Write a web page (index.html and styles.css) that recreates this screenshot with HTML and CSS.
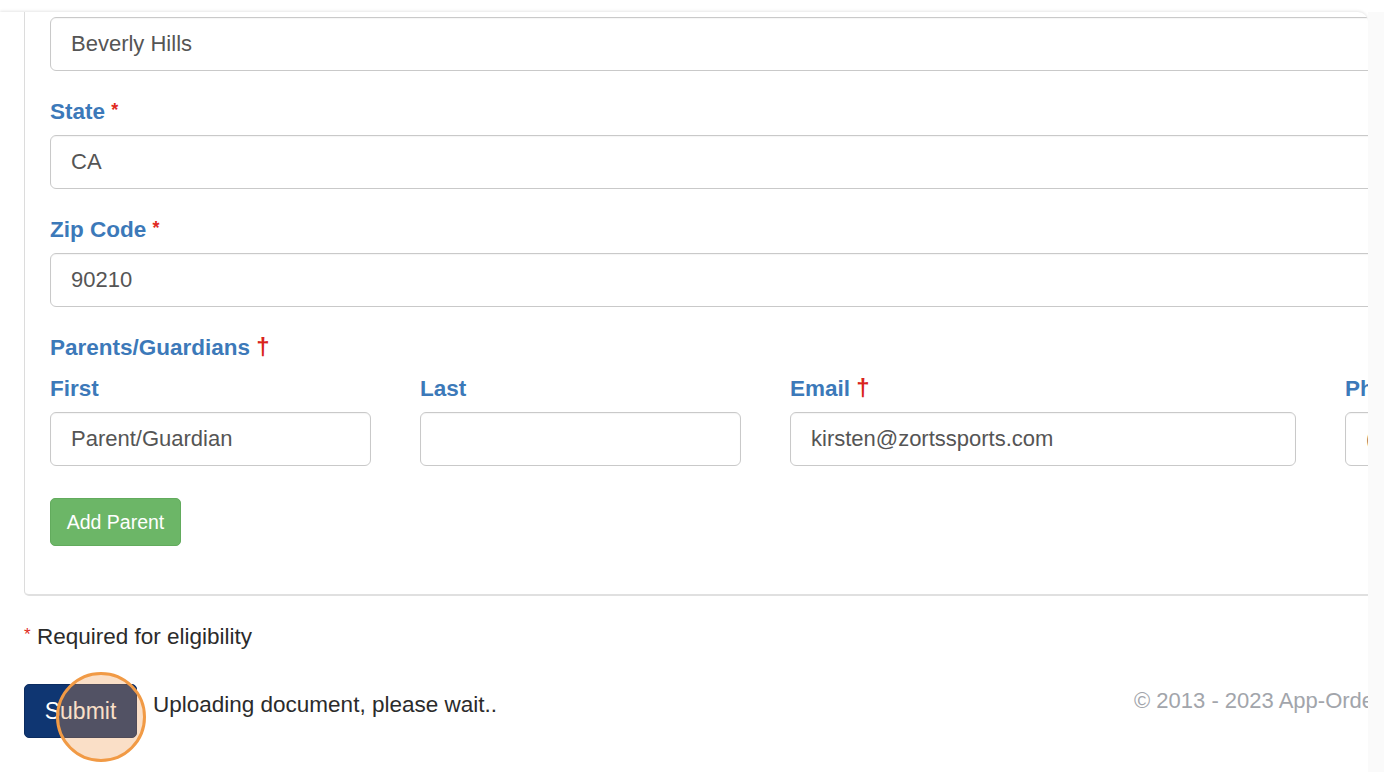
FILE: index.html
```html
<!DOCTYPE html>
<html lang="en">
<head>
<meta charset="utf-8">
<title>Registration</title>
<link rel="stylesheet" href="styles.css">
</head>
<body>
<div class="viewport">
  <div class="page">
    <div class="card">
      <div class="form-group">
        <input class="form-control wide" type="text" value="Beverly Hills">
      </div>
      <div class="form-group">
        <label class="lbl">State <span class="req">*</span></label>
        <input class="form-control wide" type="text" value="CA">
      </div>
      <div class="form-group">
        <label class="lbl">Zip Code <span class="req">*</span></label>
        <input class="form-control wide" type="text" value="90210">
      </div>
      <div class="form-group parents">
        <label class="lbl section">Parents/Guardians <span class="dag">†</span></label>
        <div class="cols">
          <div class="col c-first">
            <label class="lbl">First</label>
            <input class="form-control" type="text" value="Parent/Guardian">
          </div>
          <div class="col c-last">
            <label class="lbl">Last</label>
            <input class="form-control" type="text" value="">
          </div>
          <div class="col c-email">
            <label class="lbl">Email <span class="dag">†</span></label>
            <input class="form-control" type="text" value="kirsten@zortssports.com">
          </div>
          <div class="col c-phone">
            <label class="lbl">Phone</label>
            <input class="form-control" type="text" value="(310) 555-0100">
          </div>
        </div>
      </div>
      <button class="btn btn-add" type="button">Add Parent</button>
    </div>

    <p class="note"><span class="req small">*</span> Required for eligibility</p>

    <div class="bottom">
      <div class="submit-group">
        <span class="submit-wrap">
          <button class="btn btn-submit" type="button">Submit</button>
          <span class="click-ring"></span>
        </span>
        <span class="uploading">Uploading document, please wait..</span>
      </div>
      <div class="footer">© 2013 - 2023 App-Order Inc.</div>
    </div>
  </div>
  <div class="scroll-strip"></div>
</div>
</body>
</html>
```

FILE: styles.css
```css
* { box-sizing: border-box; }

html, body {
  margin: 0;
  padding: 0;
  background: #ffffff;
  font-family: "Liberation Sans", Arial, Helvetica, sans-serif;
  overflow: hidden;
}

.viewport {
  display: flex;
  width: 1384px;
  height: 772px;
  padding-top: 12px;
}

.page {
  width: 1368px;
  height: 760px;
  overflow: hidden;
  background: #ffffff;
  border-top-right-radius: 10px;
  box-shadow: 0 -1px 3px rgba(0, 0, 0, 0.10);
  padding-left: 24px;
}

.scroll-strip {
  width: 16px;
  height: 760px;
  background: #fafafa;
}

.card {
  width: 2300px;
  border: 1px solid #dcdcdc;
  border-top: none;
  border-bottom: 2px solid #e0e0e0;
  border-bottom-left-radius: 5px;
  padding: 5px 0 48px 25px;
}

.form-group {
  margin-bottom: 26px;
}

.lbl {
  display: block;
  height: 28px;
  font-size: 22.5px;
  line-height: 30px;
  font-weight: bold;
  color: #3c79b9;
  margin-bottom: 10px;
}

.lbl.section {
  margin-bottom: 13px;
}

.req {
  color: #e02a1e;
  font-size: 18px;
  line-height: 0;
  vertical-align: 3px;
}

.dag {
  color: #d9231b;
  font-weight: bold;
  font-size: 24px;
  line-height: 0;
}

.form-control {
  display: block;
  height: 54px;
  width: 100%;
  border: 1px solid #c9c9c9;
  border-radius: 6px;
  padding: 0 20px;
  font-family: "Liberation Sans", Arial, Helvetica, sans-serif;
  font-size: 22px;
  color: #555555;
  background: #ffffff;
  box-shadow: inset 0 1px 1px rgba(0, 0, 0, 0.04);
  outline: none;
}

.form-control.wide {
  width: 2249px;
}

.parents {
  margin-bottom: 32px;
}

.cols {
  display: flex;
  gap: 49px;
}

.c-first, .c-last, .c-phone { width: 321px; flex: none; }
.c-email { width: 506px; flex: none; }

.btn {
  font-family: "Liberation Sans", Arial, Helvetica, sans-serif;
  border: 1px solid transparent;
  cursor: pointer;
}

.btn-add {
  display: block;
  width: 131px;
  height: 48px;
  background: #6cb667;
  border-color: #62ab5d;
  border-radius: 5px;
  color: #ffffff;
  font-size: 19.5px;
  padding: 0;
}

.note {
  margin: 26px 0 0 0;
  height: 28px;
  font-size: 22.5px;
  line-height: 30px;
  color: #2b2b2b;
}

.note .small {
  font-size: 17px;
  vertical-align: 4px;
}

.bottom {
  display: grid;
  grid-template-columns: 1110px auto;
  margin-top: 34px;
}

.submit-group {
  display: flex;
  align-items: flex-start;
}

.submit-wrap {
  position: relative;
  display: block;
}

.btn-submit {
  display: block;
  width: 113px;
  height: 54px;
  background: #0f3672;
  border-color: #0b2c60;
  border-radius: 5px;
  color: #ffffff;
  font-size: 23px;
  padding: 0;
}

.click-ring {
  position: absolute;
  left: 32px;
  top: -12px;
  width: 90px;
  height: 90px;
  border-radius: 50%;
  border: 3.5px solid #f19a45;
  background: rgba(240, 150, 70, 0.30);
}

.uploading {
  margin-left: 16px;
  margin-top: 6px;
  font-size: 22.5px;
  line-height: 30px;
  color: #2b2b2b;
  white-space: nowrap;
}

.footer {
  white-space: nowrap;
  font-size: 22px;
  line-height: 28px;
  color: #a2a5ab;
  margin-top: 3px;
}
```
